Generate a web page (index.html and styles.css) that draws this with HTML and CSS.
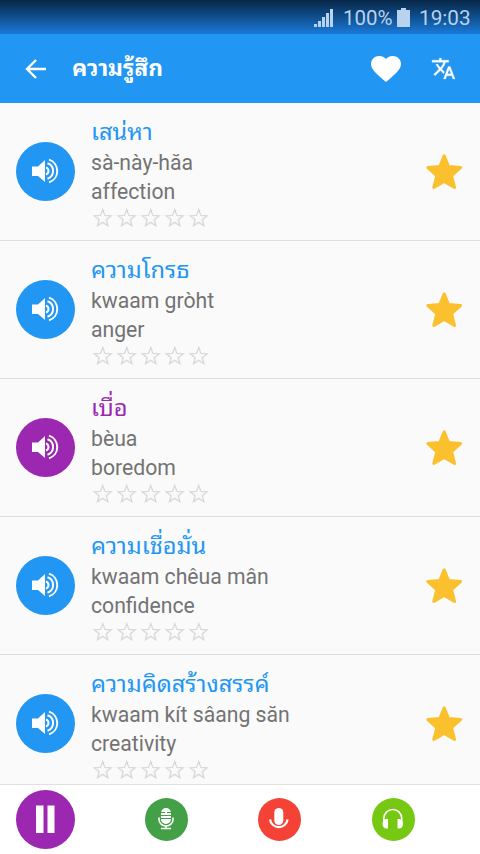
FILE: index.html
```html
<!DOCTYPE html>
<html lang="th">
<head>
<meta charset="utf-8">
<title>ความรู้สึก</title>
<link rel="stylesheet" href="styles.css">
</head>
<body>
<svg class="defs" aria-hidden="true">
  <symbol id="speaker" viewBox="0 0 28 26">
    <path fill="currentColor" d="M0 8.500h6L13 2v22L6 18H0z"/>
    <path fill="none" stroke="currentColor" stroke-width="2" d="M14 9.500a3.700 3.700 0 0 1 0 7M15.500 5.300a8.100 8.100 0 0 1 0 15.400M17 1.600a12 12 0 0 1 0 22.800"/>
  </symbol>
  <symbol id="star" viewBox="0 0 36 36">
    <path fill="#fbc02d" stroke="#fbc02d" stroke-width="3" stroke-linejoin="round" d="M18.200 1.800l4.400 10.800 11.900 1-8.900 8 3 11.900-10.400-6-10.400 6 3-11.900-8.900-8 11.900-1z"/>
  </symbol>
  <symbol id="rates" viewBox="0 0 120 20">
    <g fill="none" stroke="#dadada" stroke-width="1.400">
      <path id="rate" d="M11.700 1.600l2.200 5.800 6.200.4-4.800 3.900 1.600 6-5.200-3.300-5.200 3.300 1.600-6-4.800-3.900 6.200-.4z"/>
      <use href="#rate" x="24"/><use href="#rate" x="48"/><use href="#rate" x="72"/><use href="#rate" x="96"/>
    </g>
  </symbol>
</svg>
<div class="screen">
  <div class="status">
    <svg class="signal" viewBox="0 0 19 19"><path fill="currentColor" d="M0 16h3v3H0zM4 13h3v6H4zM8 9h3v10H8zM12 5h3v14h-3zM16 1h3v18h-3z"/></svg>
    <span class="percent">100%</span>
    <svg class="battery" viewBox="0 0 13 19"><path fill="currentColor" d="M4 0h5v2h4v17H0V2h4z"/></svg>
    <span class="clock">19:03</span>
  </div>
  <header class="appbar">
    <svg class="back" viewBox="0 0 22 20"><path fill="none" stroke="currentColor" stroke-width="2.400" d="M21 10H2M11 1L2 10l9 9"/></svg>
    <h1>ความรู้สึก</h1>
    <svg class="heart" viewBox="2 3 20 18.350" preserveAspectRatio="none"><path fill="currentColor" d="M12 21.350l-1.450-1.320C5.400 15.360 2 12.280 2 8.500 2 5.420 4.420 3 7.500 3c1.740 0 3.410.81 4.500 2.090C13.090 3.810 14.760 3 16.500 3 19.580 3 22 5.420 22 8.500c0 3.780-3.400 6.860-8.550 11.540z"/></svg>
    <svg class="translate" viewBox="0 0 24 24"><path fill="currentColor" stroke="currentColor" stroke-width=".3" d="M12.870 15.070l-2.540-2.510.03-.03A17.520 17.520 0 0 0 14.070 6H17V4h-7V2H8v2H1v1.990h11.170C11.500 7.920 10.440 9.750 9 11.350 8.070 10.320 7.300 9.190 6.690 8h-2c.73 1.630 1.730 3.170 2.980 4.560l-5.090 5.020L4 19l5-5 3.110 3.110zM18.500 10h-2L12 22h2l1.120-3h4.750L21 22h2zm-2.620 7l1.620-4.330L19.120 17z"/></svg>
  </header>
  <main class="list">
    <article class="row">
      <span class="play"><svg><use href="#speaker"/></svg></span>
      <div class="text"><h2>เสน่หา</h2><p>sà-này-hăa</p><p>affection</p><svg class="rates"><use href="#rates"/></svg></div>
      <svg class="star"><use href="#star"/></svg>
    </article>
    <article class="row">
      <span class="play"><svg><use href="#speaker"/></svg></span>
      <div class="text"><h2>ความโกรธ</h2><p>kwaam gròht</p><p>anger</p><svg class="rates"><use href="#rates"/></svg></div>
      <svg class="star"><use href="#star"/></svg>
    </article>
    <article class="row active">
      <span class="play"><svg><use href="#speaker"/></svg></span>
      <div class="text"><h2>เบื่อ</h2><p>bèua</p><p>boredom</p><svg class="rates"><use href="#rates"/></svg></div>
      <svg class="star"><use href="#star"/></svg>
    </article>
    <article class="row">
      <span class="play"><svg><use href="#speaker"/></svg></span>
      <div class="text"><h2>ความเชื่อมั่น</h2><p>kwaam chêua mân</p><p>confidence</p><svg class="rates"><use href="#rates"/></svg></div>
      <svg class="star"><use href="#star"/></svg>
    </article>
    <article class="row">
      <span class="play"><svg><use href="#speaker"/></svg></span>
      <div class="text"><h2>ความคิดสร้างสรรค์</h2><p>kwaam kít sâang săn</p><p>creativity</p><svg class="rates"><use href="#rates"/></svg></div>
      <svg class="star"><use href="#star"/></svg>
    </article>
  </main>
  <footer class="controls">
    <span class="pause"><svg viewBox="0 0 59 59"><path fill="#fff" d="M20 15.500h7.500V43H20zM31.500 15.500H38.500V43h-7z"/></svg></span>
    <span class="round studio"><svg viewBox="0 0 43 43"><rect x="16" y="10" width="10" height="16" rx="5" fill="#fff"/><path stroke="#43a047" stroke-width="1" d="M16 14.500h4M22 14.500h4M16 17.500h10M16 20.500h10"/><path fill="none" stroke="#fff" stroke-width="1.600" d="M14 19.500v2a7 6.500 0 0 0 14 0v-2M21 28v3.300M16 30.500h10"/></svg></span>
    <span class="round record"><svg viewBox="0 0 43 43"><rect x="16.300" y="10" width="9" height="17" rx="4.500" fill="#fff"/><path fill="none" stroke="#fff" stroke-width="2.200" d="M12 21.500a8.900 9 0 0 0 17.600 0"/></svg></span>
    <span class="round listen"><svg viewBox="0 0 43 43"><path fill="none" stroke="#fff" stroke-width="1.500" d="M11.800 24v-3.500a9 9 0 0 1 18 0V24"/><path fill="#fff" d="M16 21v9.500h-1.500c-2.500 0-4-1.800-4-4.700s1.500-4.800 4-4.800zM25.500 21v9.500H27c2.500 0 4-1.800 4-4.700S29.500 21 27 21z"/></svg></span>
  </footer>
</div>
</body>
</html>
```
FILE: styles.css
```css
* { box-sizing: border-box; }
body { margin: 0; font-family: Roboto, "Noto Sans Thai Looped", "Noto Looped Thai", Loma, Waree, Garuda, "Noto Sans", sans-serif; }
h1, h2, p { margin: 0; }
svg { display: block; flex: none; }
.defs { position: absolute; width: 0; height: 0; }
.screen { width: 480px; height: 854px; display: flex; flex-direction: column; overflow: hidden; background: #fafafa; }
.status { flex: none; height: 34px; padding: 1px 11px 0 0; display: flex; align-items: center; justify-content: flex-end; color: #b9d3ee; line-height: 34px; background: linear-gradient(#082848, #0f4a87 45%, #1976d2 95%); }
.signal { width: 19px; height: 19px; margin-right: 10px; }
.percent { width: 49px; font-size: 20.500px; white-space: nowrap; }
.battery { width: 13px; height: 19px; margin: 0 9px 0 5px; }
.clock { width: 50px; font-size: 20.700px; white-space: nowrap; }
.appbar { flex: none; height: 69px; padding: 0 24px 0 25px; display: flex; align-items: center; color: #fff; background: #2196f3; }
.back { width: 22px; height: 20px; }
h1 { flex: 1; padding-left: 25px; font-size: 22.700px; line-height: 36px; font-weight: 700; white-space: nowrap; }
.heart { width: 30px; height: 26px; }
.translate { width: 25px; height: 25px; margin-left: 30px; }
.list { flex: none; height: 682px; overflow: hidden; border-bottom: 1px solid #e0e0e0; }
.row { height: 138px; padding: 0 18px 0 16px; display: flex; align-items: center; border-bottom: 1px solid #dedede; --accent: #2196f3; }
.row.active { --accent: #9c27b0; }
.play { width: 59px; height: 59px; flex: none; display: grid; place-items: center; border-radius: 50%; color: #fff; background: var(--accent); }
.play svg { width: 28px; height: 26px; margin-bottom: 1px; }
.text { flex: 1; height: 137px; padding: 14px 0 0 16px; }
h2 { height: 31px; font-size: 23.600px; line-height: 31px; font-weight: 400; white-space: nowrap; color: var(--accent); }
.text p { height: 29px; font-size: 21.200px; line-height: 30px; color: #737373; white-space: nowrap; }
.rates { width: 120px; height: 20px; margin-top: 2px; }
.star { width: 36px; height: 36px; }
.controls { flex: none; height: 69px; padding-left: 16px; display: flex; align-items: center; background: #fff; }
.pause { width: 59px; height: 59px; border-radius: 50%; background: #9c27b0; }
.round { width: 43px; height: 43px; border-radius: 50%; }
.studio { margin-left: 70px; background: #43a047; }
.record { margin-left: 70px; background: #f44336; }
.listen { margin-left: 71px; background: #76c813; }
```
